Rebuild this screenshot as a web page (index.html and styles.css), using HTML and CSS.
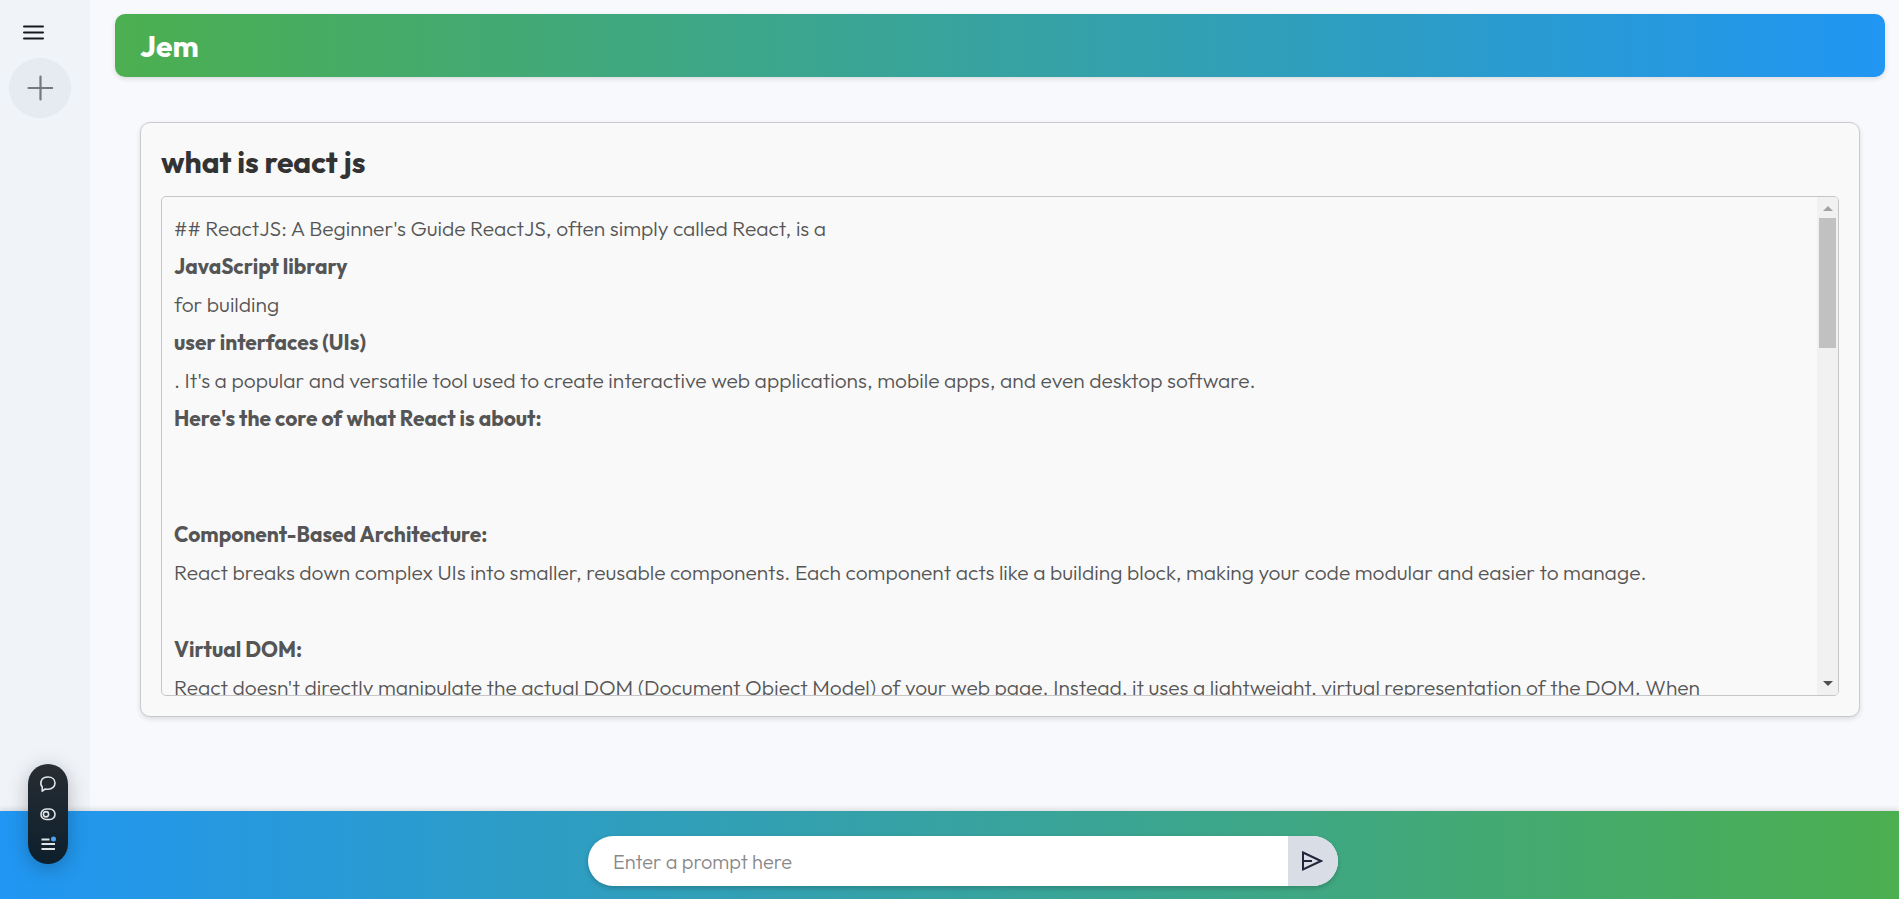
FILE: index.html
```
<!DOCTYPE html>
<html lang="en">
<head>
<meta charset="utf-8">
<meta name="viewport" content="width=device-width, initial-scale=1">
<title>Jem</title>
<link rel="stylesheet" href="styles.css">
</head>
<body>
<div class="app">
  <div class="workspace">
    <aside class="sidebar">
      <button class="menu" type="button" aria-label="Menu">
        <svg width="24" height="24" viewBox="0 0 24 24" fill="none" stroke="#16181c" stroke-width="2" stroke-linecap="round"><path d="M3 5.500h19M3 11.500h19M3 17.500h19"/></svg>
      </button>
      <button class="new-chat" type="button" aria-label="New chat">
        <svg width="26" height="26" viewBox="0 0 26 26" fill="none" stroke="#76787b" stroke-width="2.200" stroke-linecap="round"><path d="M13.500 1.500v23M1.500 13h24"/></svg>
      </button>
    </aside>
    <main class="main">
      <header class="header"><h1 class="brand">Jem</h1></header>
      <section class="card">
        <h2 class="question">what is react js</h2>
        <div class="answer">
          <div class="answer-text">
            <p class="intro">## ReactJS: A Beginner's Guide ReactJS, often simply called React, is a<br>
              <b>JavaScript library</b><br>
              for building<br>
              <b>user interfaces (UIs)</b><br>
              . It's a popular and versatile tool used to create interactive web applications, mobile apps, and even desktop software.<br>
              <b>Here's the core of what React is about:</b></p>
            <p class="topic"><b>Component-Based Architecture:</b><br>
              React breaks down complex UIs into smaller, reusable components. Each component acts like a building block, making your code modular and easier to manage.</p>
            <p class="topic"><b>Virtual DOM:</b><br>
              React doesn't directly manipulate the actual DOM (Document Object Model) of your web page. Instead, it uses a lightweight, virtual representation of the DOM. When</p>
          </div>
          <div class="scrollbar" aria-hidden="true">
            <span class="arrow arrow-up"></span>
            <span class="thumb"></span>
            <span class="arrow arrow-down"></span>
          </div>
        </div>
      </section>
    </main>
  </div>
  <footer class="footer">
    <form class="prompt">
      <input class="prompt-input" type="text" placeholder="Enter a prompt here" aria-label="Prompt">
      <button class="send" type="button" aria-label="Send">
        <svg width="22" height="22" viewBox="0 0 22 22" fill="none" stroke="#23263a" stroke-width="2"><path d="M2 2.500 20 11 2 19.500zM2 11h9"/></svg>
      </button>
    </form>
  </footer>
  <nav class="widget" aria-label="Quick tools">
    <button class="tool" type="button" aria-label="Chat">
      <svg width="18" height="18" viewBox="0 0 18 18" fill="none" stroke="#dfe4e8" stroke-width="1.600" stroke-linejoin="round"><path d="M3.200 16.200V12C.6 8.500 1.500 2 9 2c4.500 0 7 2.700 7 6s-2.700 6.300-7 6.300c-1.200 0-2 0-2.800-.3z"/></svg>
    </button>
    <button class="tool" type="button" aria-label="Toggle">
      <svg width="18" height="18" viewBox="0 0 18 18" fill="none" stroke="#dfe4e8" stroke-width="1.600"><rect x="2" y="4" width="14" height="10.500" rx="5.250"/><circle cx="7" cy="9.250" r="2.600"/></svg>
    </button>
    <button class="tool" type="button" aria-label="List">
      <svg width="18" height="18" viewBox="0 0 18 18" fill="none" stroke="#dfe4e8" stroke-width="2"><path d="M2.500 4.500h8M2.500 9h13.500M2.500 14h13.500"/><circle cx="14.500" cy="4" r="2.500" fill="#4aa3ee" stroke="none"/></svg>
    </button>
  </nav>
</div>
</body>
</html>
```
FILE: styles.css
```
* { box-sizing: border-box; }
body {
  margin: 0;
  font-family: Outfit, Lato, "Open Sans", sans-serif;
  background: #f8f9fd;
}
button { border: 0; padding: 0; background: none; cursor: pointer; }
button svg { display: block; }
.app { display: flex; flex-direction: column; min-height: 100vh; }
.workspace { display: flex; flex: 1; }
.sidebar {
  width: 90px;
  flex-shrink: 0;
  padding: 21px 9px;
  display: flex;
  flex-direction: column;
  align-items: flex-start;
  gap: 13px;
  background: #f0f4f9;
}
.menu { margin-left: 12px; }
.new-chat {
  width: 62px;
  height: 60px;
  display: grid;
  place-items: center;
  border-radius: 50%;
  background: #e6eaf1;
}
.main { flex: 1; min-width: 0; padding: 14px 14px 0 25px; }
.header {
  display: flex;
  align-items: center;
  height: 63px;
  padding: 0 25px;
  border-radius: 10px;
  background: linear-gradient(90deg, #4caf50, #2196f3);
  box-shadow: 0 2px 5px rgba(0, 0, 0, 0.12);
}
.brand { margin: 0; font-size: 30px; font-weight: 700; color: #fff; }
.card {
  margin: 45px 25px 0;
  padding: 20px;
  border: 1px solid #c9cacc;
  border-radius: 10px;
  background: #f9f9f9;
  box-shadow: 0 2px 5px rgba(0, 0, 0, 0.12);
}
.question { margin: 0 0 15px; font-size: 30px; line-height: 38px; font-weight: 700; color: #333; }
.answer {
  display: flex;
  height: 500px;
  overflow: hidden;
  border: 1px solid #c6c6c6;
  border-radius: 5px;
}
.answer-text {
  flex: 1;
  min-width: 0;
  padding: 12px;
  font-size: 21px;
  line-height: 38px;
  font-weight: 300;
  color: #555;
}
.answer-text p { margin: 0; }
.answer-text b { font-weight: 700; }
.answer-text .intro { margin-bottom: 78px; }
.answer-text .topic { margin-bottom: 39px; }
.scrollbar {
  width: 21px;
  flex-shrink: 0;
  display: flex;
  flex-direction: column;
  align-items: center;
  padding: 9px 0;
  background: #f1f1f1;
}
.arrow { border: 5px solid transparent; }
.arrow-up { border-top: 0; border-bottom-color: #a3a3a3; }
.arrow-down { border-bottom: 0; border-top-color: #505050; margin-top: auto; }
.thumb { width: 17px; height: 130px; margin-top: 7px; background: #c1c1c1; }
.footer {
  display: flex;
  justify-content: center;
  padding: 25px 0 13px 27px;
  background: linear-gradient(90deg, #2196f3, #4caf50);
  box-shadow: 0 -2px 5px rgba(0, 0, 0, 0.12);
}
.prompt {
  display: flex;
  width: 100%;
  max-width: 750px;
  height: 50px;
  overflow: hidden;
  border-radius: 25px;
  background: #fff;
  box-shadow: 0 2px 5px rgba(0, 0, 0, 0.2);
}
.prompt-input {
  flex: 1;
  min-width: 0;
  border: 0;
  padding: 0 25px;
  font: 300 20px Outfit, Lato, sans-serif;
  color: #333;
  background: transparent;
  outline: 0;
}
.prompt-input::placeholder { color: #888; opacity: 1; }
.send { width: 50px; padding-right: 2px; display: grid; place-items: center; background: #d9dde6; }
.widget {
  position: fixed;
  left: 28px;
  bottom: 35px;
  width: 40px;
  height: 100px;
  padding: 11px 0;
  display: flex;
  flex-direction: column;
  align-items: center;
  justify-content: space-between;
  border-radius: 20px;
  background: linear-gradient(#272d33, #0d1f2c);
  box-shadow: 0 4px 20px rgba(0, 0, 0, 0.25);
}
```
